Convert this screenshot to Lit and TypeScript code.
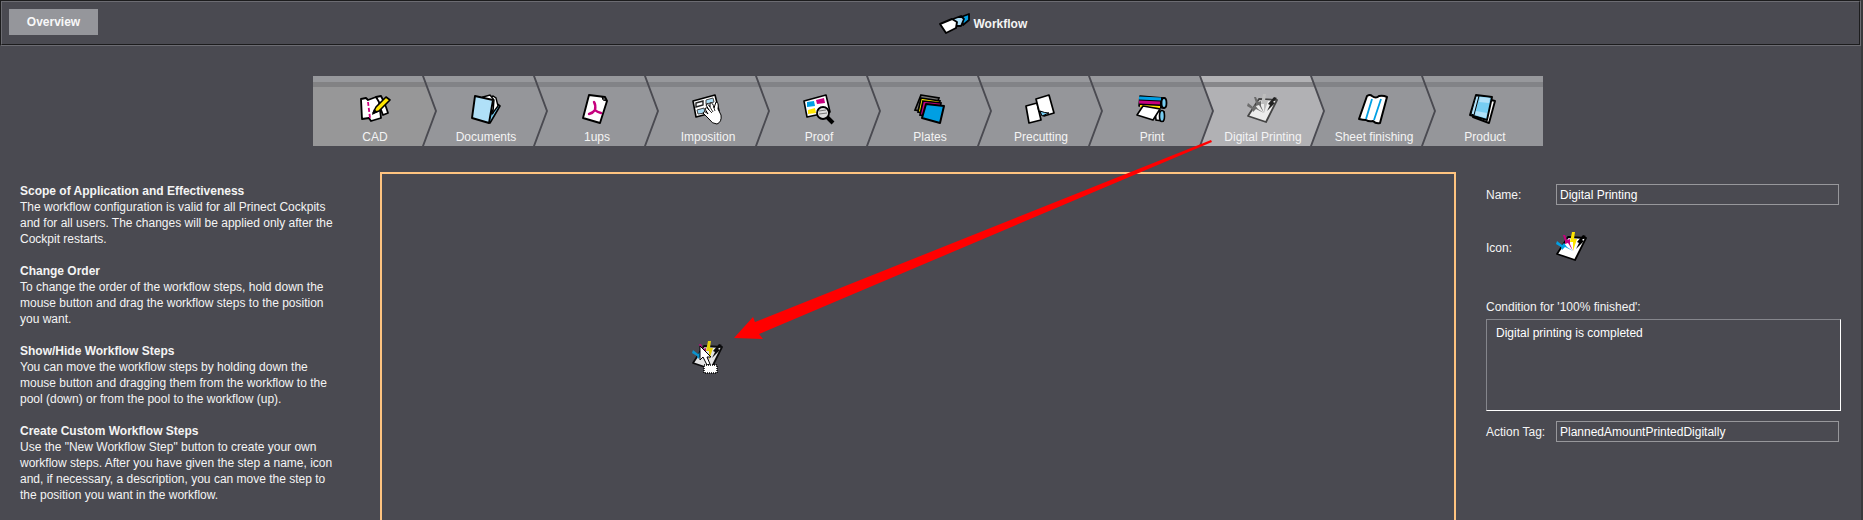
import { LitElement, html, css, svg, nothing } from "lit";
import { customElement, property, state } from "lit/decorators.js";
import { classMap } from "lit/directives/class-map.js";

const spark = (c: string, m: string, y: string, k: string, paper: string, edge: string) => svg`
  <path d="M12 5 L30 6 L19 28 L1 22 Z" fill=${paper} stroke=${edge} stroke-width="1.8" stroke-linejoin="round"/>
  <path d="M1 9 L6 13 L8 11 L11 15 L17 19 L9 15 L6 18 L5 15 L0 12 Z" fill=${c}/>
  <path d="M7 3 L9 3 L11 8 L14 7 L14 12 L17 19 L12 11 L9 12 L9 9 Z" fill=${m}/>
  <path d="M16 0 L19 0 L18 7 L21 7 L17 19 L17 10 L14 10 Z" fill=${y}/>
  <path d="M27 3 L30 4 L26 8 L28 9 L20 17 L23 11 L21 10 Z" fill=${k}/>`;

const icons: Record<string, unknown> = {
  cad: svg`
    <path d="M17 3 L22 2 L24 6 L27 13 L29 19 L24 21 Z" fill="#fff" stroke="#000" stroke-width="1.8" stroke-linejoin="round"/>
    <path d="M2 5 L7 4 L9 6 L17 3 L20 8 L22 24 L12 27 L10 24 L3 25 Z" fill="#fff" stroke="#000" stroke-width="1.8" stroke-linejoin="round"/>
    <path d="M9 8 L11 24" stroke="#d0007f" stroke-width="1.8" stroke-dasharray="4 2" fill="none"/>
    <path d="M14 19 L17 13 L27 3 L31 6 L20 17 Z" fill="#ffe600" stroke="#000" stroke-width="1.6" stroke-linejoin="round"/>
    <path d="M13 21 L15 15 L19 18 Z"/>`,
  documents: svg`
    <path d="M14 6 L26 9 L30 12 L20 29 L12 26 Z" fill="#77cdf2" stroke="#000" stroke-width="1.6" stroke-linejoin="round"/>
    <path d="M17 4 L23 2 L26 4 L28 12 L22 20 Z" fill="#fff" stroke="#000" stroke-width="1.4"/>
    <path d="M13 3 L20 1 L24 6 L23 18 Z" fill="#fff" stroke="#000" stroke-width="1.4"/>
    <path d="M5 2 L23 6 L19 29 L2 24 Z" fill="#b0e0f8" stroke="#000" stroke-width="1.9" stroke-linejoin="round"/>`,
  oneups: svg`
    <path d="M8 1 L24 3 L26 7 L19 29 L2 24 Z" fill="#fff" stroke="#000" stroke-width="1.9" stroke-linejoin="round"/>
    <path d="M21 3 L26 7 L22 6 Z" fill="#aaa" stroke="#000"/>
    <path d="M13 8 Q15 11 14 16 Q12 19 8 20 M14 16 Q16 18 20 19" fill="none" stroke="#c6007e" stroke-width="2.4" stroke-linecap="round"/>`,
  imposition: svg`
    <path d="M1 7 L23 1 L27 17 L4 23 Z" fill="#fff" stroke="#000" stroke-width="1.6" stroke-linejoin="round"/>
    <path d="M4 9 L11 7 L11 11 L4 13 Z" fill="#fff" stroke="#222" stroke-width="1.4"/>
    <path d="M14 6 L21 4 L22 8 L14 10 Z M5 16 L12 14 L13 19 L6 20 Z" fill="#a9dcf5" stroke="#444"/>
    <path d="M13 15 Q14 12 17 16 L14 11 Q15 8 18 13 L18 9 Q21 8 22 14 L24 8 Q27 8 26 15 L29 21 Q30 28 25 30 Q20 30 17 25 L11 19 Q12 16 16 20 Z" fill="#fff" stroke="#000" stroke-width="1"/>
    <path d="M17 16 L20 19 M18 13 L21 18 M22 14 L23 17" stroke="#000" stroke-width=".8"/>`,
  proof: svg`
    <path d="M1 7 L23 1 L27 18 L4 23 Z" fill="#fff" stroke="#000" stroke-width="1.6" stroke-linejoin="round"/>
    <path d="M4 8 L11 7 L12 12 L4 13 Z" fill="#009fe3"/>
    <path d="M13 6 L21 4 L22 9 L14 10 Z" fill="#c6007e"/>
    <path d="M5 16 L12 14 L13 19 L5 20 Z" fill="#ffe600"/>
    <circle cx="20" cy="19" r="6" fill="#ddd" stroke="#000" stroke-width="1.8"/>
    <path d="M16 17 L23 16 M16 20 L24 19" stroke="#777"/>
    <path d="M24 23 L30 29" stroke="#000" stroke-width="4"/>`,
  plates: svg`
    <path d="M7 1 L25 4 L20 19 L1 16 Z" fill="#777" stroke="#000" stroke-width="1.7"/>
    <path d="M7 4 L26 7 L22 21 L4 18 Z" fill="#ffe600" stroke="#000" stroke-width="1.7"/>
    <path d="M9 7 L27 9 L24 24 L6 21 Z" fill="#c6007e" stroke="#000" stroke-width="1.7"/>
    <path d="M12 10 L30 12 L26 29 L8 24 Z" fill="#009fe3" stroke="#000" stroke-width="2" stroke-linejoin="round"/>`,
  precutting: svg`
    <path d="M1 12 L12 9 L16 26 L4 29 Z" fill="#fff" stroke="#000" stroke-width="1.7" stroke-linejoin="round"/>
    <path d="M11 5 L24 1 L29 19 L19 22 L14 17 Z" fill="#fff" stroke="#000" stroke-width="1.7" stroke-linejoin="round"/>
    <path d="M15 17 Q20 19 24 19 L17 22 Z" fill="#77cdf2" stroke="#000"/>`,
  print: svg`
    <path d="M19 17 L28 18 L27 27 L20 26 Z" fill="#fff" stroke="#000" stroke-width="1.6"/>
    <ellipse cx="26" cy="22" rx="2.5" ry="5.5" fill="#77cdf2" stroke="#000" stroke-width="1.6"/>
    <path d="M4 2 L28 4 L28 14 L3 12 Z" fill="#000" stroke="#000" stroke-width="1.6" stroke-linejoin="round"/>
    <path d="M3 4 L25 5" stroke="#009fe3" stroke-width="3"/>
    <path d="M3 8 L24 9" stroke="#c6007e" stroke-width="3"/>
    <path d="M4 12 L24 13" stroke="#ffe600" stroke-width="2"/>
    <ellipse cx="28" cy="9" rx="2.5" ry="5" fill="#77cdf2" stroke="#000" stroke-width="1.8"/>
    <path d="M7 12 L24 15 L17 26 L1 21 Z" fill="#fff" stroke="#000" stroke-width="1.6" stroke-linejoin="round"/>`,
  digital: spark("#009fe3", "#c6007e", "#ffe600", "#000", "#fff", "#000"),
  digitalGrey: spark("#6d6d6d", "#6a6a6a", "#bdbdbd", "#222", "#ececec", "#444"),
  sheet: svg`
    <path d="M9 2 Q12 0 14 2 Q18 5 21 2 Q25 1 29 3 L22 29 Q18 30 15 27 Q11 28 8 26 Q5 26 1 25 Z" fill="#fff" stroke="#000" stroke-width="2" stroke-linejoin="round"/>
    <path d="M14 5 L8 25 M23 5 L16 26" stroke="#009fe3" stroke-width="1.8"/>`,
  product: svg`
    <path d="M22 6 L26 7 L20 29 L4 23 Z" fill="#fff" stroke="#000" stroke-width="1.9" stroke-linejoin="round"/>
    <path d="M7 1 L23 3 L18 26 L1 21 Z" fill="#77cdf2" stroke="#000" stroke-width="1.9" stroke-linejoin="round"/>
    <path d="M7 2 L10 2 L5 21 L2 20 Z" fill="#b0e0f8" stroke="#000"/>
    <path d="M11 3 L21 4 L20 9 L10 8 Z M7 17 L18 19 L17 24 L6 21 Z" fill="#b0e0f8"/>`,
  workflow: svg`
    <path d="M22 9 L30 6 L30 12 L24 17 Z" fill="#009fe3" stroke="#000" stroke-width="1.8" stroke-linejoin="round"/>
    <path d="M14 11 L22 8 L25 11 L22 18 L16 18 Z" fill="#a9dcf5" stroke="#000" stroke-width="1.8" stroke-linejoin="round"/>
    <path d="M1 16 L13 11 L18 14 L17 20 L7 25 Z" fill="#fff" stroke="#000" stroke-width="1.9" stroke-linejoin="round"/>`,
};

interface Step {
  id: string;
  label: string;
  icon: string;
}

const STEPS: Step[] = [
  { id: "cad", label: "CAD", icon: "cad" },
  { id: "documents", label: "Documents", icon: "documents" },
  { id: "oneups", label: "1ups", icon: "oneups" },
  { id: "imposition", label: "Imposition", icon: "imposition" },
  { id: "proof", label: "Proof", icon: "proof" },
  { id: "plates", label: "Plates", icon: "plates" },
  { id: "precutting", label: "Precutting", icon: "precutting" },
  { id: "print", label: "Print", icon: "print" },
  { id: "digital", label: "Digital Printing", icon: "digitalGrey" },
  { id: "sheet", label: "Sheet finishing", icon: "sheet" },
  { id: "product", label: "Product", icon: "product" },
];

const HELP = [
  {
    title: "Scope of Application and Effectiveness",
    text: "The workflow configuration is valid for all Prinect Cockpits and for all users. The changes will be applied only after the Cockpit restarts.",
  },
  {
    title: "Change Order",
    text: "To change the order of the workflow steps, hold down the mouse button and drag the workflow steps to the position you want.",
  },
  {
    title: "Show/Hide Workflow Steps",
    text: "You can move the workflow steps by holding down the mouse button and dragging them from the workflow to the pool (down) or from the pool to the workflow (up).",
  },
  {
    title: "Create Custom Workflow Steps",
    text: 'Use the "New Workflow Step" button to create your own workflow steps. After you have given the step a name, icon and, if necessary, a description, you can move the step to the position you want in the workflow.',
  },
];

@customElement("wf-icon")
export class WfIcon extends LitElement {
  static styles = css`
    :host { display: block; width: 32px; height: 32px; }
    .glyph { display: block; width: 100%; height: 100%; overflow: visible; }
  `;
  @property() name = "";
  render() {
    return html`<svg class="glyph" viewBox="0 0 32 32" aria-hidden="true">${icons[this.name] ?? nothing}</svg>`;
  }
}

@customElement("workflow-steps")
export class WorkflowSteps extends LitElement {
  static styles = css`
    :host { display: flex; justify-content: center; }
    .step {
      position: relative;
      flex: none;
      box-sizing: border-box;
      display: flex;
      flex-direction: column;
      align-items: center;
      width: 111px;
      height: 70px;
      margin: 0;
      padding: 18px 0 0 13px;
      border: 0;
      background: none;
      color: #f4f4f4;
      font: 12px/16px "Liberation Sans", Arial, sans-serif;
      white-space: nowrap;
    }
    .step::before {
      content: "";
      position: absolute;
      inset: 0 -13px 0 0;
      background: linear-gradient(#97989c 6px, #828387 6px 11px, #95969a 11px);
      clip-path: polygon(0 0, calc(100% - 15px) 0, calc(100% - 2px) 50%, calc(100% - 15px) 100%, 0 100%, 13px 50%);
    }
    .step.first::before {
      background: linear-gradient(#97989c 6px, #828284 6px 11px, #979798 11px);
      clip-path: polygon(0 0, calc(100% - 15px) 0, calc(100% - 2px) 50%, calc(100% - 15px) 100%, 0 100%);
    }
    .step.last { width: 120px; padding-right: 9px; }
    .step.last::before { right: 0; clip-path: polygon(0 0, 100% 0, 100% 100%, 0 100%, 13px 50%); }
    .step.selected::before { background: linear-gradient(#b2b2b5 6px, #87878a 6px 11px, #b1b1b4 11px); }
    .icon, .label { position: relative; }
    .label { margin-top: 3px; }
  `;
  @property() selected = "";
  render() {
    return STEPS.map(
      (s, i) => html`<button
        type="button"
        class=${classMap({ step: true, first: i === 0, last: i === STEPS.length - 1, selected: s.id === this.selected })}
        @click=${() => this.dispatchEvent(new CustomEvent("pick", { detail: s.id }))}
      ><wf-icon class="icon" name=${s.icon}></wf-icon><span class="label">${s.label}</span></button>`
    );
  }
}

@customElement("app-root")
export class AppRoot extends LitElement {
  static styles = css`
    :host {
      display: flex;
      flex-direction: column;
      height: 100vh;
      overflow: hidden;
      box-sizing: border-box;
      border-right: 2px solid #39393c;
      background: #4a4a51;
      color: #f4f4f4;
      font: 12px/16px "Liberation Sans", Arial, sans-serif;
    }
    * { box-sizing: border-box; }
    .header {
      flex: none;
      display: grid;
      grid-template-columns: 1fr 1fr;
      align-items: start;
      height: 46px;
      padding: 6px 7px;
      border: 2px groove #6c6c72;
    }
    .overview {
      justify-self: start;
      width: 89px;
      height: 26px;
      margin: 1px 0 0;
      padding: 0;
      border: 0;
      background: #95969b;
      color: #f8f8f8;
      font: bold 12px/16px "Liberation Sans", Arial, sans-serif;
    }
    .title {
      display: flex;
      align-items: center;
      gap: 3px;
      margin: 0;
      padding-left: 8px;
      font-size: 12px;
      line-height: 16px;
    }
    .steps { flex: none; margin: 30px 5px 0 0; }
    .main {
      flex: 1;
      min-height: 0;
      display: grid;
      grid-template-columns: 330px minmax(0, 1fr) 355px;
      column-gap: 30px;
      margin-top: 26px;
      padding: 0 20px;
    }
    .help { padding: 11px 6px 0 0; }
    .topic { margin: 0 0 16px; }
    .topic-title { margin: 0; font-size: 12px; line-height: 16px; }
    .topic-text { margin: 0; }
    .pool { position: relative; border: 2px solid #ffc480; border-bottom: 0; }
    .arrow { position: absolute; left: 350px; top: -40px; width: 490px; height: 210px; pointer-events: none; }
    .dragged { position: absolute; left: 310px; top: 167px; opacity: 0.85; }
    .cursor { position: absolute; left: 317px; top: 171px; width: 20px; height: 30px; }
    .form {
      display: grid;
      grid-template-columns: 70px minmax(0, 1fr);
      align-content: start;
      align-items: center;
      padding-top: 12px;
    }
    .field, .condition {
      margin: 0;
      border: 1px solid #97979b;
      border-radius: 0;
      outline: 0;
      background: transparent;
      color: #fff;
      font: 12px/16px "Liberation Sans", Arial, sans-serif;
    }
    .field { width: calc(100% - 2px); height: 21px; padding: 0 3px; }
    .icon-label, .icon-preview { margin: 27px 0 35px; }
    .wide { grid-column: 1 / -1; }
    .condition {
      display: block;
      width: 100%;
      height: 92px;
      margin: 4px 0 10px;
      padding: 5px 9px;
      resize: none;
      border-color: #85868c #fff #fff #85868c;
    }
  `;

  @state() selected = "digital";

  render() {
    return html`
      <header class="header">
        <button type="button" class="overview">Overview</button>
        <h1 class="title"><wf-icon name="workflow"></wf-icon>Workflow</h1>
      </header>
      <workflow-steps class="steps" .selected=${this.selected} @pick=${(e: CustomEvent) => (this.selected = e.detail)}></workflow-steps>
      <main class="main">
        <section class="help">
          ${HELP.map((h) => html`<article class="topic"><h2 class="topic-title">${h.title}</h2><p class="topic-text">${h.text}</p></article>`)}
        </section>
        <section class="pool">
          <wf-icon class="dragged" name="digital"></wf-icon>
          <svg class="cursor" viewBox="0 0 20 30" aria-hidden="true">
            <path d="M1 1 L1 15 L4 12 L8 20 L11 19 L8 12 L12 12 Z" fill="#fff" stroke="#000" stroke-width="1"/>
            <rect x="5" y="20" width="13" height="8" fill="#fff" stroke="#000" stroke-width="1.5" stroke-dasharray="1 1"/>
          </svg>
          <svg class="arrow" viewBox="0 0 490 210" aria-hidden="true">
            <path d="M479 6 L480 8 L27 200 L31 205 L2 204 L21 183 L23 188 Z" fill="#f00"/>
          </svg>
        </section>
        <form class="form">
          <label for="name">Name:</label>
          <input class="field" id="name" type="text" .value=${"Digital Printing"} />
          <span class="icon-label">Icon:</span>
          <wf-icon class="icon-preview" name="digital"></wf-icon>
          <label class="wide" for="condition">Condition for '100% finished':</label>
          <textarea class="condition wide" id="condition" .value=${"Digital printing is completed"}></textarea>
          <label for="tag">Action Tag:</label>
          <input class="field" id="tag" type="text" .value=${"PlannedAmountPrintedDigitally"} />
        </form>
      </main>
    `;
  }
}
